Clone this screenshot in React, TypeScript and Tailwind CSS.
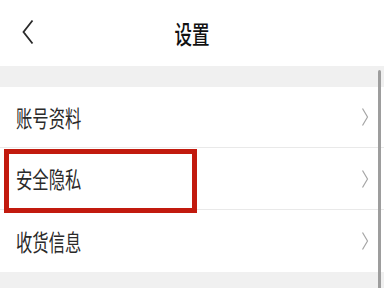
const ROWS = ["账号资料", "安全隐私", "收货信息"];

const FONT = { fontFamily: '"Noto Sans CJK SC", "Noto Sans", sans-serif' };

function ChevronRight() {
  return (
    <svg width="8" height="20" viewBox="0 0 8 20" className="shrink-0">
      <path d="M1.5 1.5 L6.5 10 L1.5 18.5" fill="none" stroke="#a6a6a6" strokeWidth="1.2" />
    </svg>
  );
}

export default function App() {
  return (
    <div className="relative w-[384px] h-[288px] overflow-hidden bg-[#f0f0f0]" style={FONT}>
      {/* Header */}
      <div className="relative h-[66px] bg-white flex items-center justify-center">
        <svg width="14" height="26" viewBox="0 0 14 26" className="absolute left-[21px] top-[19px]">
          <path d="M11.5 1.5 L2.5 13 L11.5 24.5" fill="none" stroke="#2a2a2a" strokeWidth="1.8" />
        </svg>
        <span className="text-[25px] leading-none font-medium text-[#111] scale-x-[0.7]">设置</span>
      </div>

      <div className="h-[21px]" />

      {/* List */}
      <div className="bg-white">
        {ROWS.map((label, i) => (
          <div
            key={label}
            className={`flex items-center justify-between pl-[16px] pr-[15px] ${
              i === 0 ? "h-[61px]" : "h-[62px]"
            } ${i < ROWS.length - 1 ? "border-b border-[#e9e9e9]" : ""}`}
          >
            <span className="text-[23px] leading-none text-[#2a2a2a] origin-left scale-x-[0.71]">{label}</span>
            <ChevronRight />
          </div>
        ))}
      </div>

      {/* Highlight box */}
      <div className="absolute left-[4px] top-[149px] w-[193px] h-[64px] border-[5px] border-[#c21a0e]" />

      {/* Scrollbar */}
      <div className="absolute left-[378px] top-[70px] w-[3px] h-[218px] rounded-t-full bg-[#9d9d9d]" />
    </div>
  );
}
